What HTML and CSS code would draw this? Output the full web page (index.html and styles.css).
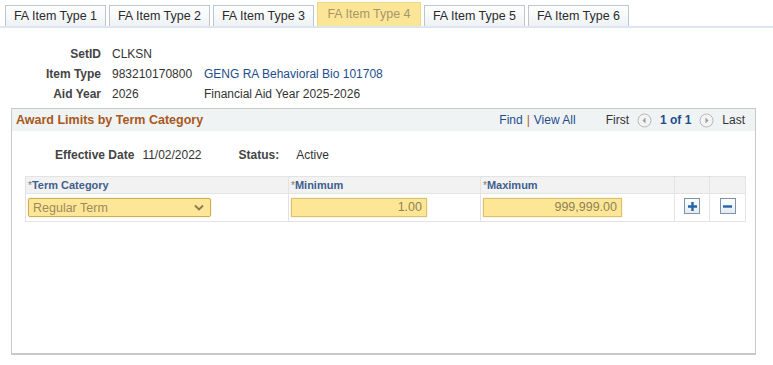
FILE: index.html
```html
<!DOCTYPE html>
<html>
<head>
<meta charset="utf-8">
<link rel="stylesheet" href="styles.css">
</head>
<body>
<div class="tabs">
  <div class="tab">FA Item Type 1</div>
  <div class="tab">FA Item Type 2</div>
  <div class="tab">FA Item Type 3</div>
  <div class="tab active">FA Item Type 4</div>
  <div class="tab">FA Item Type 5</div>
  <div class="tab">FA Item Type 6</div>
</div>
<div class="keys">
  <div class="lbl">SetID</div><div class="val">CLKSN</div><div></div>
  <div class="lbl">Item Type</div><div class="val">983210170800</div><div class="desc link">GENG RA Behavioral Bio 101708</div>
  <div class="lbl">Aid Year</div><div class="val">2026</div><div class="desc">Financial Aid Year 2025-2026</div>
</div>
<div class="box">
  <div class="boxhead">
    <div class="title">Award Limits by Term Category</div>
    <div class="nav">
      <span class="link">Find</span><span class="sep">|</span><span class="link">View All</span>
      <span class="first">First</span>
      <span class="arrow"><svg width="15" height="15" viewBox="0 0 15 15"><circle cx="7.5" cy="7.5" r="6.5" fill="#f4f4f4" stroke="#b8b8b8"/><path d="M8.5 4.5 L5.5 7.5 L8.5 10.5 Z" fill="#9a9a9a"/></svg></span>
      <span class="count">1 of 1</span>
      <span class="arrow"><svg width="15" height="15" viewBox="0 0 15 15"><circle cx="7.5" cy="7.5" r="6.5" fill="#f4f4f4" stroke="#b8b8b8"/><path d="M6.5 4.5 L9.5 7.5 L6.5 10.5 Z" fill="#9a9a9a"/></svg></span>
      <span class="last">Last</span>
    </div>
  </div>
  <div class="eff">
    <span class="lbl">Effective Date</span><span class="effval">11/02/2022</span>
    <span class="lbl status">Status:</span><span class="statval">Active</span>
  </div>
  <div class="grid">
    <div class="gh"><span class="req">*</span>Term Category</div>
    <div class="gh"><span class="req">*</span>Minimum</div>
    <div class="gh"><span class="req">*</span>Maximum</div>
    <div class="gh"></div>
    <div class="gh"></div>
    <div class="gc"><div class="select">Regular Term<svg width="10" height="7" viewBox="0 0 10 7"><path d="M1 1.5 L5 5.5 L9 1.5" fill="none" stroke="#8a7a50" stroke-width="1.8"/></svg></div></div>
    <div class="gc"><div class="input min">1.00</div></div>
    <div class="gc"><div class="input max">999,999.00</div></div>
    <div class="gc btncell"><div class="btn"><svg width="11" height="11" viewBox="0 0 11 11"><path d="M5.5 1 V10 M1 5.5 H10" stroke="#2a64a8" stroke-width="2.4"/></svg></div></div>
    <div class="gc btncell"><div class="btn"><svg width="11" height="11" viewBox="0 0 11 11"><path d="M1 5.5 H10" stroke="#2a64a8" stroke-width="2.4"/></svg></div></div>
  </div>
</div>
</body>
</html>
```
FILE: styles.css
```css
* { box-sizing: border-box; }
body {
  margin: 0;
  background: #fff;
  font-family: "Liberation Sans", Arial, sans-serif;
  font-size: 12px;
  color: #333;
}
.tabs {
  display: flex;
  gap: 3px;
  padding: 5px 0 0 5px;
  height: 28px;
  border-bottom: 2px solid #dde6ef;
  align-items: flex-end;
}
.tab {
  width: 101px;
  height: 21px;
  border: 1px solid #bfc5cc;
  border-bottom: none;
  background: linear-gradient(#ffffff, #eef2f5);
  color: #2b2b2b;
  font-size: 12.5px;
  display: flex;
  align-items: center;
  justify-content: center;
  padding-bottom: 1px;
}
.tab.active {
  width: 104px;
  height: 24px;
  background: #fbe697;
  border-color: #f3d882;
  color: #a8956a;
}
.keys {
  display: grid;
  grid-template-columns: 101px 103px 1fr;
  grid-auto-rows: 20px;
  margin-top: 16px;
}
.keys > div { line-height: 20px; }
.keys .lbl { text-align: right; font-weight: bold; color: #444; }
.keys .val { padding-left: 11px; color: #333; }
.desc { color: #333; }
.link { color: #1e4d8c; }
.box {
  margin: 4px 0 0 11px;
  width: 745px;
  height: 247px;
  border: 1px solid #c8c8c8;
  border-bottom-width: 2px;
}
.boxhead {
  height: 22px;
  background: #f0f3f4;
  display: flex;
  align-items: center;
  justify-content: space-between;
  padding: 0 10px 0 4px;
}
.title { color: #a8581b; font-weight: bold; font-size: 12.5px; }
.nav { display: flex; align-items: center; color: #333; }
.sep { color: #a8581b; margin: 0 4px; }
.first { margin-left: 30px; }
.arrow { display: inline-flex; margin: 0 8px; }
.count { font-weight: bold; color: #1e4d8c; }
.eff {
  display: flex;
  align-items: baseline;
  padding: 17px 0 0 43px;
  height: 45px;
}
.eff .lbl { font-weight: bold; color: #444; }
.effval { margin-left: 8px; }
.status { margin-left: 37px; }
.statval { margin-left: 17px; }
.grid {
  display: grid;
  grid-template-columns: 263px 192px 194px 35px 36px;
  margin-left: 13px;
  width: 720px;
  border-left: 1px solid #e3e3e3;
}
.gh {
  height: 18px;
  background: #f2f2f2;
  border-top: 1px solid #e3e3e3;
  border-right: 1px solid #e3e3e3;
  border-bottom: 1px solid #e3e3e3;
  color: #3f5f8d;
  font-weight: bold;
  font-size: 11px;
  line-height: 16px;
  padding-left: 2px;
}
.req { color: #777; font-weight: normal; font-size: 10px; }
.gc {
  height: 28px;
  border-right: 1px solid #e3e3e3;
  border-bottom: 1px solid #e3e3e3;
  padding: 4px 0 0 2px;
}
.select {
  width: 183px;
  height: 19px;
  background: #fde797;
  border: 1px solid #c9ad5c;
  border-radius: 2px;
  color: #9c8a5c;
  font-size: 12.5px;
  display: flex;
  align-items: center;
  justify-content: space-between;
  padding: 0 6px 0 4px;
  box-shadow: 0 0 2px #fde797;
}
.input {
  height: 19px;
  background: #fde797;
  border: 1px solid #d8c176;
  color: #8f8256;
  text-align: right;
  font-size: 12.5px;
  line-height: 17px;
  padding-right: 4px;
  box-shadow: 0 0 2px #fde797;
}
.min { width: 136px; }
.max { width: 139px; }
.btncell { display: flex; justify-content: center; padding: 4px 0 0; }
.btn {
  width: 16px;
  height: 16px;
  border: 1px solid #7a94a8;
  background: linear-gradient(#ffffff, #e4ebf0);
  display: flex;
  align-items: center;
  justify-content: center;
}
```
